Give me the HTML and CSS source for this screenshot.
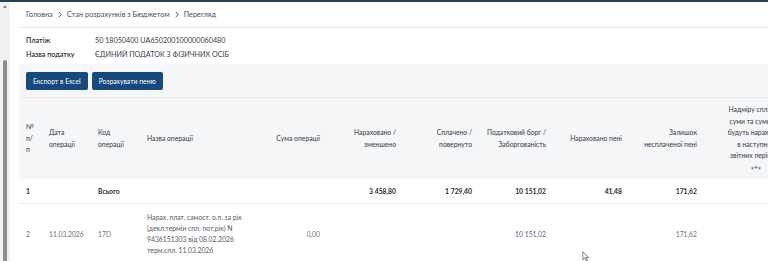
FILE: index.html
```html
<!DOCTYPE html>
<html lang="uk">
<head>
    <meta charset="UTF-8">
    <meta name="viewport" content="width=device-width, initial-scale=1.0">
    <title>Стан розрахунків з Бюджетом — Перегляд</title>
    <link rel="stylesheet" href="styles.css">
</head>
<body>

<div class="topline"></div>
<div class="frame">
    <div class="scrollbar">
        <span class="arrow-up"></span>
        <span class="thumb"></span>
    </div>

    <div class="page">
        <nav class="crumbs">
            <span>Головна</span>
            <svg class="chev" viewBox="0 0 6 10"><path d="M1 1l4 4-4 4"/></svg>
            <span>Стан розрахунків з Бюджетом</span>
            <svg class="chev" viewBox="0 0 6 10"><path d="M1 1l4 4-4 4"/></svg>
            <span>Перегляд</span>
        </nav>

        <div class="info">
            <div class="info-row">
                <span class="info-label">Платіж</span>
                <span class="info-value">50 18050400 UA650200100000060480</span>
            </div>
            <div class="info-row">
                <span class="info-label">Назва податку</span>
                <span class="info-value">ЄДИНИЙ ПОДАТОК З ФІЗИЧНИХ ОСІБ</span>
            </div>
        </div>

        <div class="panel">
            <div class="actions">
                <button type="button" class="btn">Експорт в Excel</button>
                <button type="button" class="btn">Розрахувати пеню</button>
            </div>

            <table class="grid">
                <colgroup>
                    <col style="width:23px">
                    <col style="width:49px">
                    <col style="width:49px">
                    <col style="width:120px">
                    <col style="width:67px">
                    <col style="width:76px">
                    <col style="width:76px">
                    <col style="width:74px">
                    <col style="width:76px">
                    <col style="width:75px">
                    <col style="width:104px">
                </colgroup>
                <thead>
                    <tr>
                        <th>№<br>п/<br>п</th>
                        <th>Дата<br>операції</th>
                        <th>Код<br>операції</th>
                        <th>Назва операції</th>
                        <th class="num">Сума операції</th>
                        <th class="num">Нараховано /<br>зменшено</th>
                        <th class="num">Сплачено /<br>повернуто</th>
                        <th class="num">Податковий борг /<br>Заборгованість</th>
                        <th class="num">Нараховано пені</th>
                        <th class="num">Залишок<br>несплаченої пені</th>
                        <th class="mid">Надміру сплачені<br>суми та суми, які<br>будуть нараховані<br>в наступних<br>звітних періодах<br>«+»</th>
                    </tr>
                </thead>
                <tbody>
                    <tr class="total">
                        <td>1</td>
                        <td></td>
                        <td>Всього</td>
                        <td></td>
                        <td class="num"></td>
                        <td class="num">3 458,80</td>
                        <td class="num">1 729,40</td>
                        <td class="num">10 151,02</td>
                        <td class="num">41,48</td>
                        <td class="num">171,62</td>
                        <td></td>
                    </tr>
                    <tr class="entry">
                        <td>2</td>
                        <td>11.03.2026</td>
                        <td>17D</td>
                        <td class="desc">Нарах. плат. самост. о.п. за рік (декл.термін спл. пот.рік) N 9436151303 від 08.02.2026 терм.спл. 11.03.2026</td>
                        <td class="num">0,00</td>
                        <td class="num"></td>
                        <td class="num"></td>
                        <td class="num debt">10 151,02</td>
                        <td class="num"></td>
                        <td class="num">171,62</td>
                        <td></td>
                    </tr>
                </tbody>
            </table>
        </div>
    </div>
</div>

<svg class="cursor" viewBox="0 0 10 14"><path d="M1 1v10l2.5-2.4 1.8 4 1.4-.6-1.8-3.9H8.4z"/></svg>

</body>
</html>
```

FILE: styles.css
```css
body {
    margin: 0;
    font-family: Lato, "Open Sans", sans-serif;
    color: #2f3640;
    background: #fff;
    height: 261px;
    overflow: hidden;
    position: relative;
}
.topline {
    height: 2px;
    background: #2a3d57;
}
.frame {
    display: flex;
}
.scrollbar {
    position: relative;
    width: 10px;
    height: 259px;
    flex-shrink: 0;
    background: #f1f1f1;
    margin-right: 9px;
}
.arrow-up {
    position: absolute;
    left: 3px;
    top: 3px;
    border-left: 2px solid transparent;
    border-right: 2px solid transparent;
    border-bottom: 3px solid #8a8a8a;
}
.thumb {
    position: absolute;
    left: 3px;
    top: 58px;
    width: 4px;
    bottom: 0;
    background: #8d8d8d;
    border-radius: 2px 2px 0 0;
}
.page {
    flex: 1;
    min-width: 0;
    overflow: hidden;
}
.crumbs {
    display: flex;
    align-items: center;
    gap: 5px;
    height: 25px;
    padding-left: 7px;
    border-bottom: 1px solid #e6e8eb;
    font-size: 7.4px;
    color: #4a505a;
}
.chev {
    width: 4px;
    height: 7px;
    fill: none;
    stroke: #3a3f47;
    stroke-width: 1.3;
}
.info {
    padding: 5px 7px 3px;
    font-size: 7.2px;
}
.info-row {
    display: flex;
    height: 14px;
    align-items: center;
}
.info-label {
    width: 69px;
    font-weight: 600;
    color: #252b33;
}
.info-value {
    color: #3b4049;
}
.panel {
    background: #f5f6f8;
}
.actions {
    display: flex;
    gap: 4px;
    padding: 8px 7px 7px;
    border-bottom: 1px solid #e9ebee;
}
.btn {
    height: 18px;
    padding: 0 7px;
    border: none;
    border-radius: 2px;
    background: #17497b;
    color: #fff;
    font-family: inherit;
    font-size: 6.8px;
}
.grid {
    table-layout: fixed;
    width: 789px;
    border-collapse: collapse;
    font-size: 6.8px;
}
.grid th {
    height: 68px;
    padding: 6px 7px;
    font-weight: 400;
    line-height: 11.5px;
    text-align: left;
    color: #333a44;
    vertical-align: middle;
}
.grid td {
    padding: 0 7px;
    vertical-align: middle;
    background: #fff;
    border-bottom: 1px solid #eceef1;
}
.grid .num {
    text-align: right;
}
.grid .mid {
    text-align: center;
}
.total td {
    height: 24px;
    font-weight: 700;
    color: #262b33;
}
.entry td {
    padding-top: 8px;
    padding-bottom: 8px;
    color: #6d727b;
}
.entry .desc {
    line-height: 11px;
    color: #555b65;
}
.entry .debt {
    color: #52678a;
}
.cursor {
    position: absolute;
    left: 582px;
    top: 251px;
    width: 8px;
    height: 11px;
    fill: #fff;
    stroke: #333;
    stroke-width: 0.8;
}
```
